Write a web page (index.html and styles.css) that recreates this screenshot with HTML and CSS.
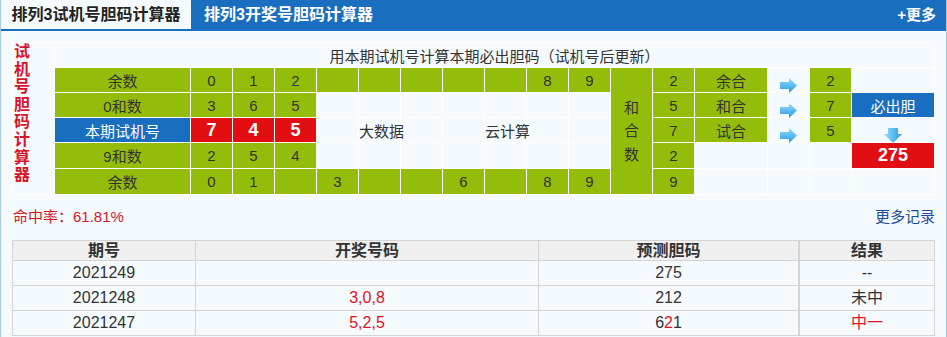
FILE: index.html
```html
<!DOCTYPE html>
<html lang="zh-CN">
<head>
  <meta charset="UTF-8" />
  <title>排列3试机号胆码计算器</title>
  <link rel="stylesheet" href="styles.css">
</head>
<body>
  <div class="page">
    <div class="tabs">
      <div class="tab active">排列3试机号胆码计算器</div>
      <div class="tab">排列3开奖号胆码计算器</div>
      <a class="more" href="#">+更多</a>
    </div>

    <div class="content">
      <div class="calc">
        <div class="side"><span>试机号胆码计算器</span></div>
        <div class="title">用本期试机号计算本期必出胆码（试机号后更新）</div>
        <div class="sum-col"><span>和合数</span></div>

        <!-- row 1 -->
        <div class="g">余数</div>
        <div class="g">0</div><div class="g">1</div><div class="g">2</div>
        <div class="g"></div><div class="g"></div><div class="g"></div><div class="g"></div><div class="g"></div>
        <div class="g">8</div><div class="g">9</div>
        <div class="g">2</div>
        <div class="g">余合</div>
        <div class="l arrow"><svg width="17" height="15" viewBox="0 0 17 15"><path d="M0 4H9V0L17 7.5L9 15V11H0Z" fill="url(#ar)"/></svg></div>
        <div class="g">2</div>
        <div class="l"></div>

        <!-- row 2 -->
        <div class="g">0和数</div>
        <div class="g">3</div><div class="g">6</div><div class="g">5</div>
        <div class="l"></div><div class="l"></div><div class="l"></div><div class="l"></div><div class="l"></div><div class="l"></div><div class="l"></div>
        <div class="g">5</div>
        <div class="g">和合</div>
        <div class="l arrow"><svg width="17" height="15" viewBox="0 0 17 15"><path d="M0 4H9V0L17 7.5L9 15V11H0Z" fill="url(#ar)"/></svg></div>
        <div class="g">7</div>
        <div class="b">必出胆</div>

        <!-- row 3 -->
        <div class="b">本期试机号</div>
        <div class="r">7</div><div class="r">4</div><div class="r">5</div>
        <div class="l"></div>
        <div class="l note">大数据</div>
        <div class="l"></div><div class="l"></div>
        <div class="l note">云计算</div>
        <div class="l"></div><div class="l"></div>
        <div class="g">7</div>
        <div class="g">试合</div>
        <div class="l arrow"><svg width="17" height="15" viewBox="0 0 17 15"><path d="M0 4H9V0L17 7.5L9 15V11H0Z" fill="url(#ar)"/></svg></div>
        <div class="g">5</div>
        <div class="l arrow"><svg width="18" height="15" viewBox="0 0 18 15"><path d="M4 0H14V6H18L9 15L0 6H4Z" fill="url(#ad)"/></svg></div>

        <!-- row 4 -->
        <div class="g">9和数</div>
        <div class="g">2</div><div class="g">5</div><div class="g">4</div>
        <div class="l"></div><div class="l"></div><div class="l"></div><div class="l"></div><div class="l"></div><div class="l"></div><div class="l"></div>
        <div class="g">2</div>
        <div class="l"></div><div class="l"></div><div class="l"></div>
        <div class="r">275</div>

        <!-- row 5 -->
        <div class="g">余数</div>
        <div class="g">0</div><div class="g">1</div><div class="g"></div>
        <div class="g">3</div><div class="g"></div><div class="g"></div><div class="g">6</div><div class="g"></div>
        <div class="g">8</div><div class="g">9</div>
        <div class="g">9</div>
        <div class="l"></div><div class="l"></div><div class="l"></div><div class="l"></div>
      </div>

      <div class="info">
        <span class="rate">命中率：61.81%</span>
        <a class="records" href="#">更多记录</a>
      </div>

      <table class="history">
        <tr>
          <th class="c-issue">期号</th>
          <th class="c-open">开奖号码</th>
          <th class="c-guess">预测胆码</th>
          <th class="c-result">结果</th>
        </tr>
        <tr><td>2021249</td><td></td><td>275</td><td class="c-result">--</td></tr>
        <tr><td>2021248</td><td class="red">3,0,8</td><td>212</td><td class="c-result">未中</td></tr>
        <tr><td>2021247</td><td class="red">5,2,5</td><td>6<span class="red">2</span>1</td><td class="c-result red">中一</td></tr>
      </table>
    </div>
  </div>

  <svg class="defs" width="0" height="0">
    <defs>
      <linearGradient id="ar" x1="0" y1="0" x2="0" y2="1">
        <stop offset="0" stop-color="#9adcfb"/>
        <stop offset="0.5" stop-color="#5bbcf1"/>
        <stop offset="1" stop-color="#2f96dc"/>
      </linearGradient>
      <linearGradient id="ad" x1="0" y1="0" x2="1" y2="0">
        <stop offset="0" stop-color="#9adcfb"/>
        <stop offset="0.5" stop-color="#5bbcf1"/>
        <stop offset="1" stop-color="#2f96dc"/>
      </linearGradient>
    </defs>
  </svg>
</body>
</html>
```

FILE: styles.css
```css
body {
  margin: 0;
  background-color: #f5faff;
  font-family: "Liberation Sans", "Noto Sans CJK SC", sans-serif;
  color: #333;
}

a {
  text-decoration: none;
}

.page {
  width: 945px;
  border-left: 1px solid #a9c8e8;
  border-right: 1px solid #a9c8e8;
  min-height: 400px;
}

.tabs {
  display: flex;
  align-items: flex-start;
  height: 31px;
  background-color: #1a6ec0;
}

.tab {
  height: 29px;
  line-height: 29px;
  font-size: 16px;
  font-weight: bold;
  color: #fff;
  padding-left: 13px;
}

.tab.active {
  width: 190px;
  padding-left: 0;
  text-align: center;
  background-color: #f5faff;
  color: #222;
}

.more {
  margin-left: auto;
  padding-right: 10px;
  line-height: 29px;
  font-size: 15px;
  font-weight: bold;
  color: #fff;
}

.content {
  padding: 11px 11px 0 11px;
}

/* calculator grid */
.calc {
  display: grid;
  grid-template-columns: 41px 135px repeat(10, 41px) 41px 41px 72px 41px 41px 82px;
  grid-template-rows: 24px 24px 24px 24px 25px 25px;
  gap: 1px;
  width: max-content;
  background-color: #fff;
  border: 1px solid #fff;
  font-size: 15px;
}

.calc > div {
  display: flex;
  align-items: center;
  justify-content: center;
  background-color: #f5faff;
}

.side {
  grid-column: 1;
  grid-row: 1 / 7;
  align-items: flex-start !important;
  justify-content: flex-start !important;
}

.side span {
  width: 16px;
  padding-left: 1px;
  font-size: 16px;
  font-weight: bold;
  line-height: 17.6px;
  color: #d7142d;
}

.title {
  grid-column: 2 / 19;
  grid-row: 1;
}

.sum-col {
  grid-column: 13;
  grid-row: 2 / 7;
  background-color: #94bd0b !important;
}

.sum-col span {
  width: 15px;
  line-height: 23.5px;
}

.calc .g {
  background-color: #94bd0b;
}

.calc .b {
  background-color: #1a6ec0;
  color: #fff;
}

.calc .r {
  background-color: #e10f12;
  color: #fff;
  font-size: 18px;
  font-weight: bold;
}

.calc .note {
  justify-content: flex-start;
  white-space: nowrap;
  position: relative;
  z-index: 1;
}

.calc .arrow {
  padding-top: 10px;
  box-sizing: border-box;
}

.defs {
  position: absolute;
}

/* hit rate line */
.info {
  display: flex;
  justify-content: space-between;
  margin-top: 12px;
  line-height: 20px;
  font-size: 15px;
}

.rate {
  color: #d9141c;
  padding-left: 1px;
}

.records {
  color: #1d4c9c;
}

/* history table */
.history {
  margin-top: 13px;
  width: 923px;
  border-collapse: collapse;
  table-layout: fixed;
  font-size: 16px;
}

.history th,
.history td {
  border: 1px solid #d4d4d4;
  padding: 0;
  text-align: center;
}

.history th {
  height: 19px;
  line-height: 19px;
  background-color: #f0f0f0;
  font-weight: bold;
}

.history td {
  height: 24px;
  line-height: 24px;
}

.c-issue { width: 182px; }
.c-open { width: 342px; }
.c-guess { width: 259px; }

.history .c-result {
  border-left: 2px solid #d4d4d4;
}

.red {
  color: #e0141e;
}
```
